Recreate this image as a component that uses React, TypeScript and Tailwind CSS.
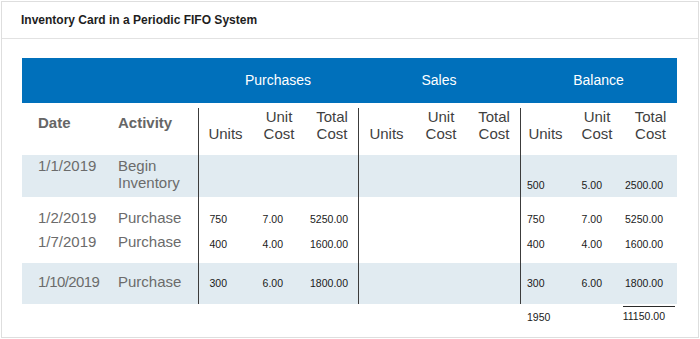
import React from "react";

const F = { fontFamily: '"Liberation Sans", Arial, sans-serif' };

function Num({ children }: { children: React.ReactNode }) {
  return <span className="text-[10.5px] text-[#1a1a1a] leading-[12px]">{children}</span>;
}

type Cells = [string, string, string];

function PCells({ v, cls }: { v?: Cells; cls: string }) {
  if (!v) return <div className={`w-[160px] border-l border-[#3c3c3c] ${cls}`} />;
  return (
    <>
      <div className={`w-[54px] border-l border-[#3c3c3c] flex justify-end pr-[25px] ${cls}`}><Num>{v[0]}</Num></div>
      <div className={`w-[54px] flex justify-end pr-[23px] ${cls}`}><Num>{v[1]}</Num></div>
      <div className={`w-[52px] flex justify-end pr-[10px] ${cls}`}><Num>{v[2]}</Num></div>
    </>
  );
}

function BCells({ v, cls }: { v: Cells; cls: string }) {
  return (
    <>
      <div className={`w-[50px] border-l border-[#3c3c3c] flex pl-[6px] ${cls}`}><Num>{v[0]}</Num></div>
      <div className={`w-[54px] flex justify-end pr-[22px] ${cls}`}><Num>{v[1]}</Num></div>
      <div className={`w-[53px] flex justify-end pr-[14px] ${cls}`}><Num>{v[2]}</Num></div>
    </>
  );
}

export default function App() {
  return (
    <div className="w-[700px] h-[339px] bg-white p-[1px]" style={F}>
      <div className="h-[337px] border border-[#dedede] flex flex-col">
        <div className="h-[37px] shrink-0 border-b border-[#e2e2e2] flex items-center pl-[19px] text-[12px] font-bold text-[#1e1e1e]">
          Inventory Card in a Periodic FIFO System
        </div>

        <div className="ml-[20px] w-[655px] mt-[19px] flex flex-col">
          {/* Blue header */}
          <div className="h-[45px] bg-[#0070bb] flex text-white text-[14px]">
            <div className="w-[176px]" />
            <div className="w-[160px] flex items-center justify-center">Purchases</div>
            <div className="w-[162px] flex items-center justify-center">Sales</div>
            <div className="w-[157px] flex items-center justify-center">Balance</div>
          </div>
          <div className="h-[5px]" />

          {/* Column headers */}
          <div className="h-[47px] flex text-[15px] leading-[17px]">
            <div className="w-[88px] pl-[16px] pt-[6px] font-bold text-[#666666]">Date</div>
            <div className="w-[88px] pl-[8px] pt-[6px] font-bold text-[#666666]">Activity</div>
            <div className="w-[54px] border-l border-[#3c3c3c] text-center pt-[17px] text-[#3f3f3f]">Units</div>
            <div className="w-[54px] text-center text-[#3f3f3f]">Unit<br />Cost</div>
            <div className="w-[52px] text-center text-[#3f3f3f]">Total<br />Cost</div>
            <div className="w-[56px] border-l border-[#3c3c3c] text-center pt-[17px] text-[#3f3f3f]">Units</div>
            <div className="w-[54px] text-center text-[#3f3f3f]">Unit<br />Cost</div>
            <div className="w-[52px] text-center text-[#3f3f3f]">Total<br />Cost</div>
            <div className="w-[50px] border-l border-[#3c3c3c] text-center pt-[17px] text-[#3f3f3f]">Units</div>
            <div className="w-[54px] text-center text-[#3f3f3f]">Unit<br />Cost</div>
            <div className="w-[53px] text-center text-[#3f3f3f]">Total<br />Cost</div>
          </div>

          {/* Row 1 */}
          <div className="h-[42px] flex bg-[#e1ebf1] text-[15px] leading-[17px] text-[#6b6b6b]">
            <div className="w-[88px] pl-[16px] pt-[2px]">1/1/2019</div>
            <div className="w-[88px] pl-[8px] pt-[2px]">Begin<br />Inventory</div>
            <PCells cls="" />
            <div className="w-[162px] border-l border-[#3c3c3c]" />
            <BCells v={["500", "5.00", "2500.00"]} cls="items-end pb-[6px]" />
          </div>

          {/* Row 2 */}
          <div className="h-[33px] flex text-[15px] leading-[24px] text-[#6b6b6b]">
            <div className="w-[88px] pl-[16px] pt-[9px]">1/2/2019</div>
            <div className="w-[88px] pl-[8px] pt-[9px]">Purchase</div>
            <PCells v={["750", "7.00", "5250.00"]} cls="items-center pt-[10px]" />
            <div className="w-[162px] border-l border-[#3c3c3c]" />
            <BCells v={["750", "7.00", "5250.00"]} cls="items-center pt-[10px]" />
          </div>

          {/* Row 3 */}
          <div className="h-[33px] flex text-[15px] leading-[24px] text-[#6b6b6b]">
            <div className="w-[88px] pl-[16px]">1/7/2019</div>
            <div className="w-[88px] pl-[8px]">Purchase</div>
            <PCells v={["400", "4.00", "1600.00"]} cls="items-start pt-[8px]" />
            <div className="w-[162px] border-l border-[#3c3c3c]" />
            <BCells v={["400", "4.00", "1600.00"]} cls="items-start pt-[8px]" />
          </div>

          {/* Row 4 */}
          <div className="h-[41px] flex bg-[#e1ebf1] text-[15px] leading-[17px] text-[#6b6b6b]">
            <div className="w-[88px] pl-[16px] flex items-center pb-[4px] tracking-[-0.6px]">1/10/2019</div>
            <div className="w-[88px] pl-[8px] flex items-center pb-[4px]">Purchase</div>
            <PCells v={["300", "6.00", "1800.00"]} cls="items-center pb-[2px]" />
            <div className="w-[162px] border-l border-[#3c3c3c]" />
            <BCells v={["300", "6.00", "1800.00"]} cls="items-center pb-[2px]" />
          </div>

          {/* Totals */}
          <div className="flex">
            <div className="w-[498px]" />
            <div className="w-[50px] pl-[7px] pt-[7px] flex items-start"><Num>1950</Num></div>
            <div className="w-[54px]" />
            <div className="w-[53px] flex flex-col">
              <div className="mt-[2px] -ml-[1px] w-[52px] border-t border-[#2a2a2a]" />
              <div className="pt-[3px] flex justify-end pr-[12px]"><Num>11150.00</Num></div>
            </div>
          </div>
        </div>
      </div>
    </div>
  );
}
